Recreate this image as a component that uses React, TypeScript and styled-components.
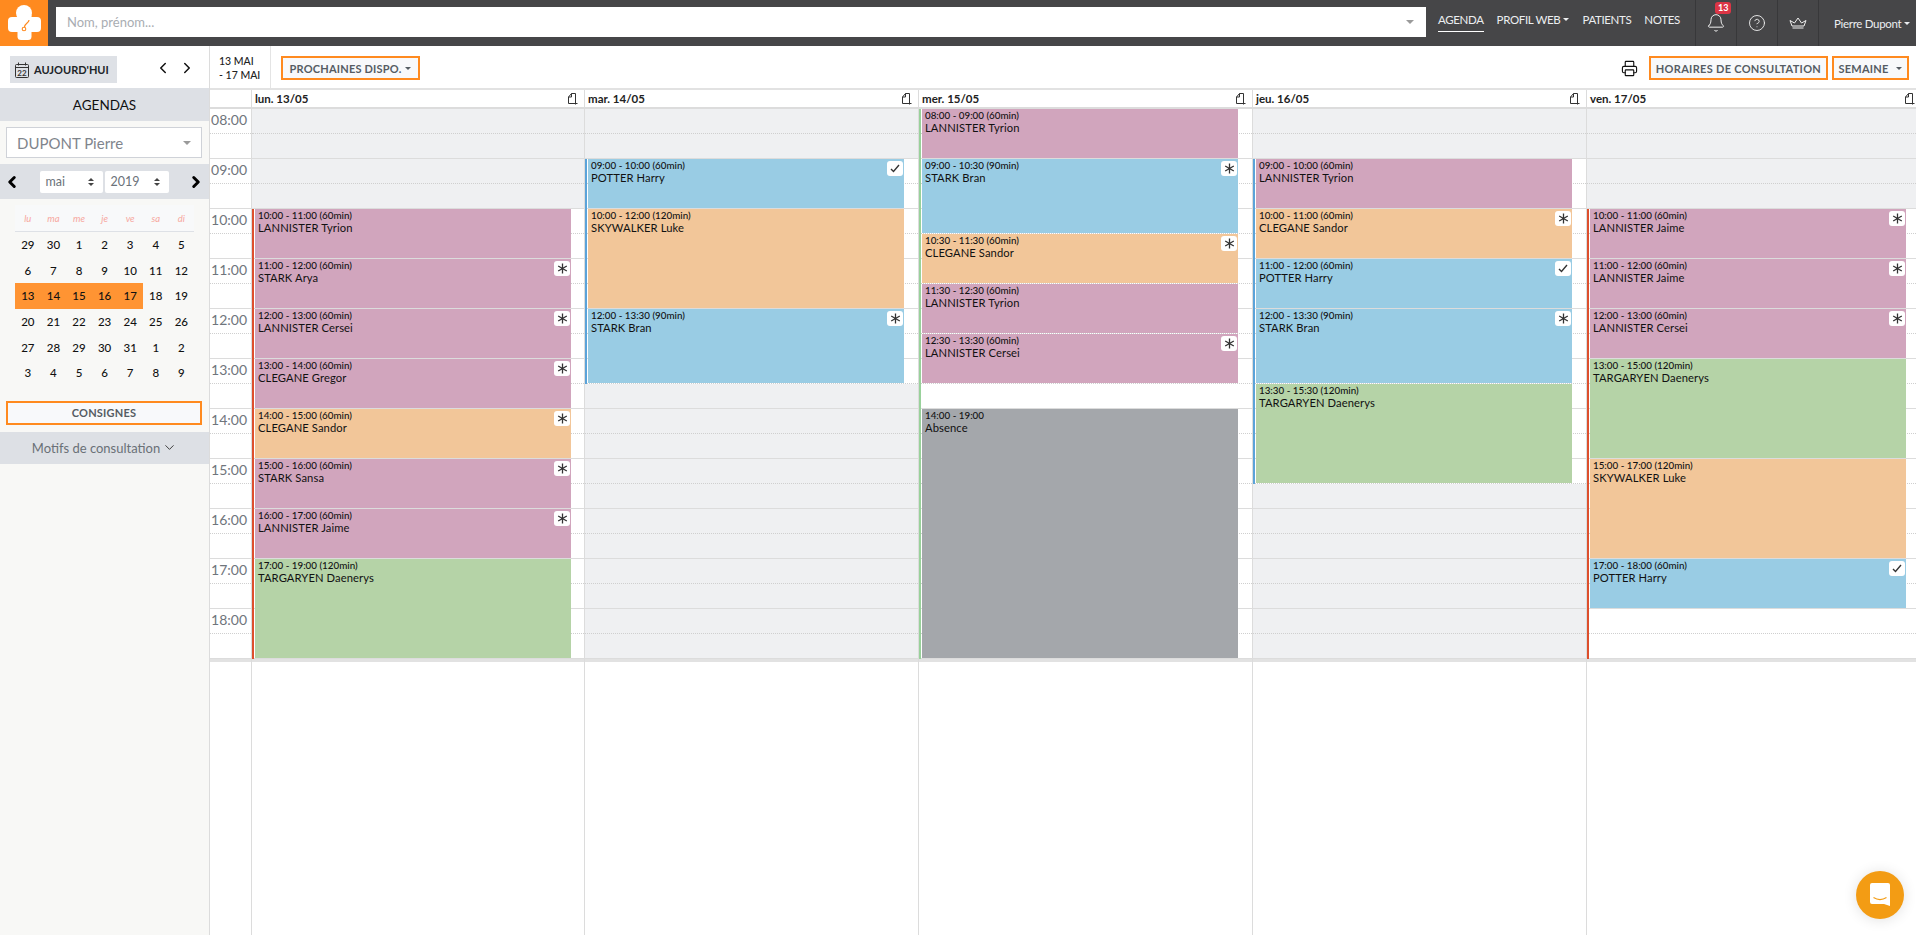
import React from 'react';
import styled, {createGlobalStyle} from 'styled-components';
import {Bell, ChevronDown, ChevronLeft, ChevronRight, CircleHelp, Printer} from 'lucide-react';

type Tone = 'pink' | 'blue' | 'orange' | 'green' | 'gray';
type Mark = 'star' | 'check';

interface Booking {
    readonly start: number;
    readonly end: number;
    readonly tone: Tone;
    readonly name: string;
    readonly mark?: Mark;
}

interface Day {
    readonly label: string;
    readonly stripe: {from: number; to: number; color: string};
    readonly open: [number, number];
    readonly bookings: Booking[];
}

const HOUR_PX = 50;
const FONT = `Lato, "Noto Sans", sans-serif`;

const TONES: Record<Tone, string> = {
    pink: '#d1a5bd',
    blue: '#99cce4',
    orange: '#f2c699',
    green: '#b5d3a7',
    gray: '#a4a7ab',
};

const DAYS: Day[] = [
    {
        label: 'lun. 13/05',
        stripe: {from: 10, to: 19, color: '#dd4f2d'},
        open: [10, 19],
        bookings: [
            {start: 10, end: 11, tone: 'pink', name: 'LANNISTER Tyrion'},
            {start: 11, end: 12, tone: 'pink', name: 'STARK Arya', mark: 'star'},
            {start: 12, end: 13, tone: 'pink', name: 'LANNISTER Cersei', mark: 'star'},
            {start: 13, end: 14, tone: 'pink', name: 'CLEGANE Gregor', mark: 'star'},
            {start: 14, end: 15, tone: 'orange', name: 'CLEGANE Sandor', mark: 'star'},
            {start: 15, end: 16, tone: 'pink', name: 'STARK Sansa', mark: 'star'},
            {start: 16, end: 17, tone: 'pink', name: 'LANNISTER Jaime', mark: 'star'},
            {start: 17, end: 19, tone: 'green', name: 'TARGARYEN Daenerys'},
        ],
    },
    {
        label: 'mar. 14/05',
        stripe: {from: 9, to: 13.5, color: '#5ba3d9'},
        open: [9, 13.5],
        bookings: [
            {start: 9, end: 10, tone: 'blue', name: 'POTTER Harry', mark: 'check'},
            {start: 10, end: 12, tone: 'orange', name: 'SKYWALKER Luke'},
            {start: 12, end: 13.5, tone: 'blue', name: 'STARK Bran', mark: 'star'},
        ],
    },
    {
        label: 'mer. 15/05',
        stripe: {from: 8, to: 19, color: '#99d19b'},
        open: [8, 19],
        bookings: [
            {start: 8, end: 9, tone: 'pink', name: 'LANNISTER Tyrion'},
            {start: 9, end: 10.5, tone: 'blue', name: 'STARK Bran', mark: 'star'},
            {start: 10.5, end: 11.5, tone: 'orange', name: 'CLEGANE Sandor', mark: 'star'},
            {start: 11.5, end: 12.5, tone: 'pink', name: 'LANNISTER Tyrion'},
            {start: 12.5, end: 13.5, tone: 'pink', name: 'LANNISTER Cersei', mark: 'star'},
            {start: 14, end: 19, tone: 'gray', name: 'Absence'},
        ],
    },
    {
        label: 'jeu. 16/05',
        stripe: {from: 9, to: 15.5, color: '#5ba3d9'},
        open: [9, 15.5],
        bookings: [
            {start: 9, end: 10, tone: 'pink', name: 'LANNISTER Tyrion'},
            {start: 10, end: 11, tone: 'orange', name: 'CLEGANE Sandor', mark: 'star'},
            {start: 11, end: 12, tone: 'blue', name: 'POTTER Harry', mark: 'check'},
            {start: 12, end: 13.5, tone: 'blue', name: 'STARK Bran', mark: 'star'},
            {start: 13.5, end: 15.5, tone: 'green', name: 'TARGARYEN Daenerys'},
        ],
    },
    {
        label: 'ven. 17/05',
        stripe: {from: 10, to: 19, color: '#dd4f2d'},
        open: [10, 19],
        bookings: [
            {start: 10, end: 11, tone: 'pink', name: 'LANNISTER Jaime', mark: 'star'},
            {start: 11, end: 12, tone: 'pink', name: 'LANNISTER Jaime', mark: 'star'},
            {start: 12, end: 13, tone: 'pink', name: 'LANNISTER Cersei', mark: 'star'},
            {start: 13, end: 15, tone: 'green', name: 'TARGARYEN Daenerys'},
            {start: 15, end: 17, tone: 'orange', name: 'SKYWALKER Luke'},
            {start: 17, end: 18, tone: 'blue', name: 'POTTER Harry', mark: 'check'},
        ],
    },
];

const HOURS = [8, 9, 10, 11, 12, 13, 14, 15, 16, 17, 18];
const HALF_SLOTS = Array.from({length: 22}, (_, i) => 8 + i / 2);

const WEEKDAYS = ['lu', 'ma', 'me', 'je', 've', 'sa', 'di'];
const MONTH_CELLS = [
    29, 30, 1, 2, 3, 4, 5,
    6, 7, 8, 9, 10, 11, 12,
    13, 14, 15, 16, 17, 18, 19,
    20, 21, 22, 23, 24, 25, 26,
    27, 28, 29, 30, 31, 1, 2,
    3, 4, 5, 6, 7, 8, 9,
];

const GlobalStyle = createGlobalStyle`
  html, body {
    margin: 0;
    padding: 0;
    height: 100%;
    overflow: hidden;
    background: #fff;
    font-family: ${FONT};
  }

  * {
    box-sizing: border-box;
  }
`;

const Page = styled.div`
  display: flex;
  flex-direction: column;
  height: 935px;
  overflow: hidden;
`;

const Header = styled.header`
  display: flex;
  align-items: stretch;
  height: 46px;
  flex: none;
  background: #464648;
`;

const LogoBox = styled.div`
  width: 48px;
  flex: none;
  background: #ff8a1f;

  svg {
    display: block;
  }
`;

const SearchBox = styled.div`
  display: flex;
  align-items: center;
  justify-content: space-between;
  flex: none;
  width: 1370px;
  height: 30px;
  margin: 7px 12px 0 8px;
  padding: 0 12px 0 11px;
  background: #fff;
  color: #a9adb2;
  font-size: 13px;
`;

const Caret = styled.span<{$color?: string; $size?: number; $up?: boolean}>`
  display: inline-block;
  width: 0;
  height: 0;
  border-left: ${p => p.$size ?? 4}px solid transparent;
  border-right: ${p => p.$size ?? 4}px solid transparent;
  ${p => (p.$up ? 'border-bottom' : 'border-top')}: ${p => p.$size ?? 4}px solid ${p => p.$color ?? 'currentColor'};
`;

const Nav = styled.nav`
  display: flex;
  flex: none;
  gap: 13px;
  width: 257px;
`;

const NavLink = styled.a<{$active?: boolean}>`
  display: flex;
  align-items: center;
  gap: 3px;
  height: 24px;
  margin-top: 8px;
  color: #eceef0;
  font-size: 11.5px;
  letter-spacing: -0.35px;
  white-space: nowrap;
  border-bottom: 1px solid ${p => (p.$active ? '#fff' : 'transparent')};
`;

const HeaderCell = styled.div`
  position: relative;
  display: flex;
  flex: none;
  align-items: center;
  justify-content: center;
  width: 41px;
  color: #f0f0f0;
  border-left: 1px solid #38383a;
`;

const BellBadge = styled.span`
  position: absolute;
  top: 2px;
  left: 19px;
  padding: 0 3px;
  min-width: 16px;
  height: 12px;
  line-height: 12px;
  border-radius: 3px;
  background: #dc3545;
  color: #fff;
  font-size: 9px;
  font-weight: 700;
  text-align: center;
`;

const UserCell = styled.div`
  display: flex;
  align-items: center;
  gap: 3px;
  flex: 1;
  padding-left: 15px;
  color: #eceef0;
  font-size: 11.5px;
  letter-spacing: -0.3px;
  white-space: nowrap;
  border-left: 1px solid #38383a;
`;

const Body = styled.div`
  display: flex;
  flex: 1;
  min-height: 0;
`;

const Sidebar = styled.aside`
  display: flex;
  flex-direction: column;
  width: 210px;
  flex: none;
  background: #f8f8f6;
  border-right: 1px solid #dcdcdc;
`;

const SideTop = styled.div`
  display: flex;
  align-items: center;
  height: 42px;
  padding: 10px 0 5px 10px;
  background: #fff;
`;

const TodayButton = styled.div`
  display: flex;
  align-items: center;
  gap: 5px;
  width: 107px;
  height: 27px;
  padding-left: 5px;
  background: #dee1e6;
  color: #212529;
  font-size: 11px;
  font-weight: 700;
`;

const WeekArrows = styled.div`
  display: flex;
  gap: 6px;
  margin: -4px 0 0 37px;
  color: #111;
`;

const GrayBar = styled.div`
  display: flex;
  align-items: center;
  justify-content: center;
  flex: none;
  background: #dde0e5;
`;

const AgendasBar = styled(GrayBar)`
  height: 33px;
  color: #111;
  font-size: 13.5px;
`;

const AgendaSelect = styled.div`
  display: flex;
  align-items: center;
  justify-content: space-between;
  height: 31px;
  margin: 6px 7px 6px 6px;
  padding: 0 10px;
  border: 1px solid #cfd2d8;
  background: #fff;
  color: #7f858d;
  font-size: 15px;
`;

const MonthBar = styled(GrayBar)`
  justify-content: space-between;
  height: 35px;
  padding: 0 4px 0 3px;
  color: #000;
`;

const MonthSelects = styled.div`
  display: flex;
  gap: 2px;
`;

const MonthSelect = styled.div<{$width: number}>`
  display: flex;
  align-items: center;
  justify-content: space-between;
  width: ${p => p.$width}px;
  height: 22px;
  padding: 0 9px 0 6px;
  border-radius: 2px;
  background: #fff;
  color: #6b727a;
  font-size: 12.5px;
`;

const UpDown = styled.span`
  display: flex;
  flex-direction: column;
  gap: 2px;
  color: #444;
`;

const MonthTable = styled.div`
  display: grid;
  grid-template-columns: repeat(7, 25.6px);
  grid-template-rows: 27px;
  grid-auto-rows: 25.6px;
  margin: 6px 0 0 15px;
`;

const WeekdayCell = styled.div`
  display: flex;
  align-items: center;
  justify-content: center;
  background: #f8f9fa;
  color: #f7a8a0;
  font-size: 9.5px;
  font-style: italic;
  border-bottom: 1px solid #dee1e6;
`;

const DateCell = styled.div<{$picked?: boolean}>`
  display: flex;
  align-items: center;
  justify-content: center;
  background: ${p => (p.$picked ? '#ff9433' : 'transparent')};
  color: #111;
  font-size: 11.5px;
  font-weight: 500;
`;

const OutlineButton = styled.div`
  display: inline-flex;
  flex: none;
  align-items: center;
  justify-content: center;
  gap: 4px;
  height: 24px;
  border: 2px solid #ff8a1f;
  background: #f8f9fb;
  color: #555c63;
  font-size: 11px;
  font-weight: 700;
  letter-spacing: 0.2px;
  white-space: nowrap;
`;

const ConsignesButton = styled(OutlineButton)`
  width: 196px;
  margin: 15px 0 7px 6px;
`;

const MotifsBar = styled(GrayBar)`
  gap: 2px;
  height: 32px;
  color: #6a7077;
  font-size: 13px;
`;

const Main = styled.main`
  display: flex;
  flex-direction: column;
  flex: 1;
  min-width: 0;
`;

const Toolbar = styled.div`
  display: flex;
  align-items: center;
  height: 42px;
  flex: none;
`;

const DateRange = styled.div`
  display: flex;
  flex-direction: column;
  justify-content: center;
  gap: 1px;
  width: 61px;
  height: 100%;
  padding: 3px 0 0 9px;
  border-right: 1px solid #e4e4e4;
  color: #222;
  font-size: 10.5px;
  font-weight: 500;
  line-height: 13px;
`;

const DispoButton = styled(OutlineButton)`
  width: 139px;
  margin: 2px 0 0 10px;
`;

const ToolbarEnd = styled.div`
  display: flex;
  align-items: center;
  gap: 4px;
  margin: 2px 7px 0 auto;
  color: #111;
`;

const HorairesButton = styled(OutlineButton)`
  width: 179px;
  margin-left: 7px;
  letter-spacing: 0.3px;
`;

const SemaineButton = styled(OutlineButton)`
  width: 77px;
  gap: 8px;
`;

const Columns = `41px 333px repeat(3, 334px) 1fr`;

const DayHeads = styled.div`
  display: grid;
  grid-template-columns: ${Columns};
  height: 19px;
  flex: none;
  border-top: 2px solid #e2e2e2;
`;

const DayHead = styled.div`
  display: flex;
  align-items: center;
  justify-content: space-between;
  padding: 0 6px 0 3px;
  border-left: 1px solid #dcdcdc;
  color: #222;
  font-size: 11.5px;
  font-weight: 700;

  &:last-child {
    padding-right: 1px;
  }
`;

const Planner = styled.div`
  display: grid;
  grid-template-columns: ${Columns};
  flex: 1;
  min-height: 0;
  border-top: 2px solid #dcdcdc;
`;

const Column = styled.div<{$first?: boolean}>`
  border-left: ${p => (p.$first ? 0 : '1px solid #dcdcdc')};
`;

const SlotArea = styled.div`
  position: relative;
  height: ${HOUR_PX * 11}px;
`;

const EndRule = styled.div`
  height: 3px;
  background: #e2e2e2;
`;

const Slot = styled.div<{$closed: boolean; $hour: boolean}>`
  height: ${HOUR_PX / 2}px;
  background: ${p => (p.$closed ? '#eff0f2' : '#fff')};
  border-bottom: 1px ${p => (p.$hour ? 'solid #dcdcdc' : 'dotted #cfcfcf')};
`;

const HourCell = styled.div`
  height: ${HOUR_PX}px;
  padding: 1px 4px 0 0;
  background:
    linear-gradient(#dcdcdc, #dcdcdc) bottom / 100% 1px no-repeat,
    repeating-linear-gradient(90deg, #cfcfcf 0 1px, transparent 1px 2px) 0 24px / 100% 1px no-repeat;
  color: #6f757c;
  font-size: 14px;
  line-height: 20px;
  text-align: right;
`;

const Stripe = styled.div`
  position: absolute;
  left: 0;
  width: 2px;
`;

const EventCard = styled.div<{$tone: Tone}>`
  position: absolute;
  left: 3px;
  width: 316px;
  padding: 1px 0 0 3px;
  overflow: hidden;
  background: ${p => TONES[p.$tone]};
  color: #111;
`;

const EventTime = styled.div`
  font-size: 9.8px;
  font-weight: 500;
  line-height: 11px;
`;

const EventName = styled.div`
  font-size: 11.2px;
  line-height: 13px;
  letter-spacing: 0.1px;
`;

const MarkBadge = styled.span`
  position: absolute;
  top: 2px;
  right: 1px;
  display: flex;
  align-items: center;
  justify-content: center;
  width: 16px;
  height: 15px;
  border-radius: 3px;
  background: #fff;
  color: #333;
`;

const ChatBubble = styled.div`
  position: absolute;
  right: 12px;
  bottom: 16px;
  display: flex;
  align-items: center;
  justify-content: center;
  width: 48px;
  height: 48px;
  border-radius: 50%;
  background: #f39c14;
  box-shadow: 0 1px 14px rgba(0, 0, 0, 0.12);
`;

function Logo() {
    return (
        <svg width='48' height='46' viewBox='0 0 48 46'>
            <g fill='#fff'>
                <circle cx='24' cy='13' r='8'/>
                <rect x='8' y='17' width='33' height='15' rx='4'/>
                <rect x='17.500' y='13' width='14' height='27' rx='3.500'/>
            </g>
            <path d='M29 20c0 3-4 3-4.500 7' fill='none' stroke='#ff8a1f' strokeWidth='1.200'/>
            <circle cx='24' cy='29' r='1.800' fill='none' stroke='#ff8a1f' strokeWidth='1.100'/>
        </svg>
    );
}

function CrownIcon() {
    return (
        <svg width='18' height='12' viewBox='0 0 18 12' fill='none' stroke='#f0f0f0' strokeWidth='1'>
            <path d='M3 9 1 3.500 5.500 6 9 1l3.500 5L17 3.500 15 9z'/>
            <path d='M3.500 11h11'/>
        </svg>
    );
}

function CalendarIcon() {
    return (
        <svg width='14' height='16' viewBox='0 0 14 16'>
            <rect x='.5' y='2.500' width='13' height='13' rx='1' fill='none' stroke='#333'/>
            <path d='M.5 5.500h13M3.500 .5v3M10.500 .5v3' stroke='#333'/>
            <text x='7' y='13.500' fontSize='8' textAnchor='middle' fill='#333' fontFamily={FONT}>22</text>
        </svg>
    );
}

function AddPageIcon() {
    return (
        <svg width='10' height='12' viewBox='0 0 10 12' fill='none' stroke='#333' strokeWidth='1'>
            <path d='M7 10.500H.5V4L3.500 .5H7.500V8'/>
            <path d='M.5 4h3V.5M7.500 8v3.500M6 10.500h3.500'/>
        </svg>
    );
}

function StarMark() {
    return (
        <svg width='11' height='11' viewBox='0 0 11 11' stroke='currentColor' strokeWidth='1.300'>
            <path d='M5.500 .5v10M1.200 3l8.600 5M1.200 8l8.600-5'/>
        </svg>
    );
}

function CheckMark() {
    return (
        <svg width='10' height='9' viewBox='0 0 10 9' fill='none' stroke='currentColor' strokeWidth='1.400'>
            <path d='M1 5l2.500 2.500L9 1'/>
        </svg>
    );
}

function ChatIcon() {
    return (
        <svg width='22' height='26' viewBox='0 0 22 26'>
            <path d='M3 1h16a2 2 0 0 1 2 2v21l-6-2H3a2 2 0 0 1-2-2V3a2 2 0 0 1 2-2z' fill='#fff'/>
            <path d='M4.500 15.500c4 2.500 9 2.500 13 0' fill='none' stroke='#f39c14' strokeWidth='1.200'/>
        </svg>
    );
}

function pad(value: number) {
    const hours = Math.floor(value);
    const minutes = value % 1 ? '30' : '00';
    return `${String(hours).padStart(2, '0')}:${minutes}`;
}

function BookingCard({booking}: {booking: Booking}) {
    const {start, end, tone, name, mark} = booking;
    const isAbsence = name === 'Absence';
    const span = `${pad(start)} - ${pad(end)}`;
    return (
        <EventCard
            $tone={tone}
            style={{top: (start - 8) * HOUR_PX, height: (end - start) * HOUR_PX - 1}}
        >
            <EventTime>{isAbsence ? span : `${span} (${(end - start) * 60}min)`}</EventTime>
            <EventName>{name}</EventName>
            {mark && <MarkBadge>{mark === 'star' ? <StarMark/> : <CheckMark/>}</MarkBadge>}
        </EventCard>
    );
}

function MonthPicker() {
    return (
        <MonthTable>
            {WEEKDAYS.map(d => <WeekdayCell key={d}>{d}</WeekdayCell>)}
            {MONTH_CELLS.map((d, i) => (
                <DateCell key={i} $picked={i >= 14 && i <= 18}>{d}</DateCell>
            ))}
        </MonthTable>
    );
}

function SpinArrows() {
    return (
        <UpDown>
            <Caret $up $size={3}/>
            <Caret $size={3}/>
        </UpDown>
    );
}

export default function App() {
    return (
        <Page>
            <GlobalStyle/>
            <Header>
                <LogoBox><Logo/></LogoBox>
                <SearchBox>
                    Nom, prénom...
                    <Caret $color='#9a9a9a'/>
                </SearchBox>
                <Nav>
                    <NavLink $active>AGENDA</NavLink>
                    <NavLink>PROFIL WEB <Caret $size={3}/></NavLink>
                    <NavLink>PATIENTS</NavLink>
                    <NavLink>NOTES</NavLink>
                </Nav>
                <HeaderCell>
                    <Bell size={20} strokeWidth={1.2}/>
                    <BellBadge>13</BellBadge>
                </HeaderCell>
                <HeaderCell><CircleHelp size={18} strokeWidth={1.2}/></HeaderCell>
                <HeaderCell><CrownIcon/></HeaderCell>
                <UserCell>Pierre Dupont <Caret $size={3}/></UserCell>
            </Header>
            <Body>
                <Sidebar>
                    <SideTop>
                        <TodayButton><CalendarIcon/>AUJOURD'HUI</TodayButton>
                        <WeekArrows>
                            <ChevronLeft size={18} strokeWidth={2}/>
                            <ChevronRight size={18} strokeWidth={2}/>
                        </WeekArrows>
                    </SideTop>
                    <AgendasBar>AGENDAS</AgendasBar>
                    <AgendaSelect>DUPONT Pierre <Caret $color='#9a9a9a'/></AgendaSelect>
                    <MonthBar>
                        <ChevronLeft size={18} strokeWidth={4}/>
                        <MonthSelects>
                            <MonthSelect $width={63}>mai <SpinArrows/></MonthSelect>
                            <MonthSelect $width={64}>2019 <SpinArrows/></MonthSelect>
                        </MonthSelects>
                        <ChevronRight size={18} strokeWidth={4}/>
                    </MonthBar>
                    <MonthPicker/>
                    <ConsignesButton>CONSIGNES</ConsignesButton>
                    <MotifsBar>Motifs de consultation <ChevronDown size={15} strokeWidth={1.5} color='#333'/></MotifsBar>
                </Sidebar>
                <Main>
                    <Toolbar>
                        <DateRange>
                            <span>13 MAI</span>
                            <span>- 17 MAI</span>
                        </DateRange>
                        <DispoButton>PROCHAINES DISPO. <Caret $size={3}/></DispoButton>
                        <ToolbarEnd>
                            <Printer size={17} strokeWidth={1.6}/>
                            <HorairesButton>HORAIRES DE CONSULTATION</HorairesButton>
                            <SemaineButton>SEMAINE <Caret $size={3}/></SemaineButton>
                        </ToolbarEnd>
                    </Toolbar>
                    <DayHeads>
                        <span/>
                        {DAYS.map(day => (
                            <DayHead key={day.label}>
                                {day.label}
                                <AddPageIcon/>
                            </DayHead>
                        ))}
                    </DayHeads>
                    <Planner>
                        <Column $first>
                            <SlotArea>
                                {HOURS.map(h => <HourCell key={h}>{pad(h)}</HourCell>)}
                            </SlotArea>
                            <EndRule/>
                        </Column>
                        {DAYS.map(day => (
                            <Column key={day.label}>
                                <SlotArea>
                                    {HALF_SLOTS.map(t => (
                                        <Slot
                                            key={t}
                                            $closed={t < day.open[0] || t >= day.open[1]}
                                            $hour={t % 1 !== 0}
                                        />
                                    ))}
                                    <Stripe
                                        style={{
                                            top: (day.stripe.from - 8) * HOUR_PX,
                                            height: (day.stripe.to - day.stripe.from) * HOUR_PX,
                                            background: day.stripe.color,
                                        }}
                                    />
                                    {day.bookings.map(b => (
                                        <BookingCard key={b.start} booking={b}/>
                                    ))}
                                </SlotArea>
                                <EndRule/>
                            </Column>
                        ))}
                    </Planner>
                </Main>
            </Body>
            <ChatBubble><ChatIcon/></ChatBubble>
        </Page>
    );
}
